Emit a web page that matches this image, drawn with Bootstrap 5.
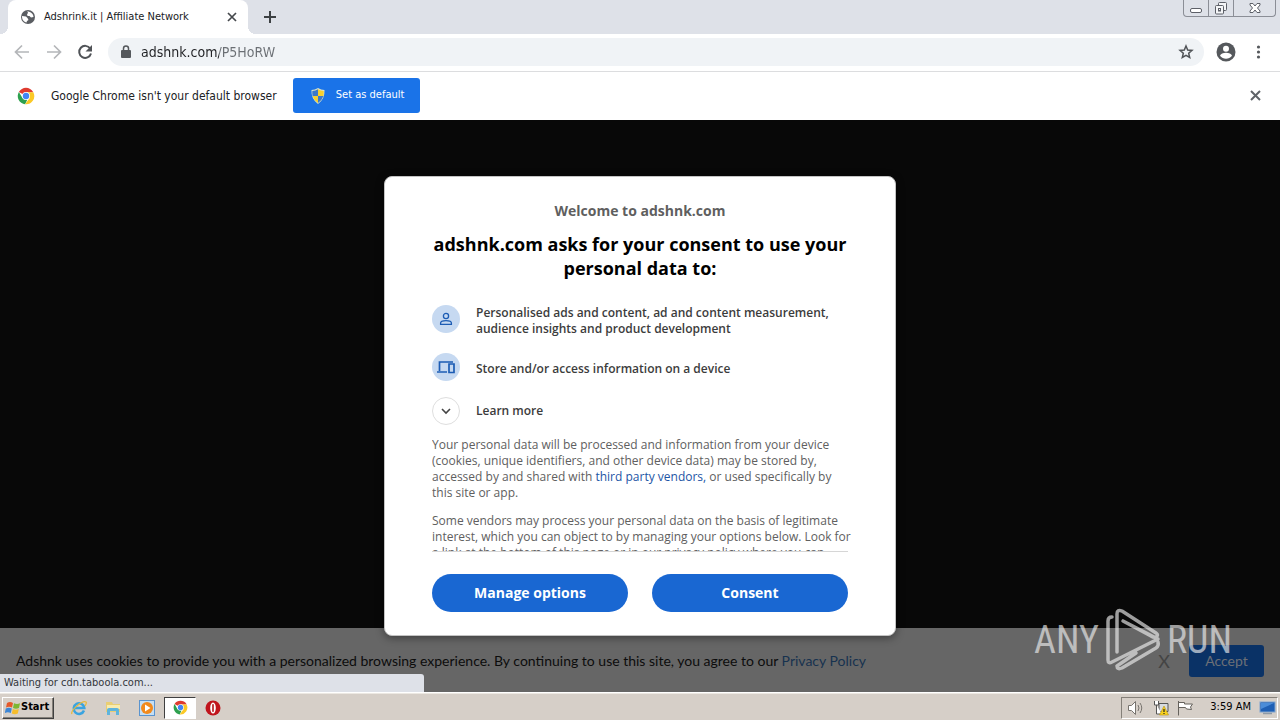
<!DOCTYPE html>
<html lang="en">
<head>
<meta charset="utf-8">
<meta name="viewport" content="width=device-width, initial-scale=1">
<title>Adshrink.it | Affiliate Network</title>
<link href="https://cdn.jsdelivr.net/npm/bootstrap@5.3.0/dist/css/bootstrap.min.css" rel="stylesheet">
<style>
  :root { --ui: "DejaVu Sans Condensed", "DejaVu Sans", sans-serif; --chrome-ink: #5f6368; }
  body { font-family: var(--ui); color: #202124; background: #d6cfc8; min-height: 100vh; }
  svg { display: block; flex: none; }
  .bare { border: 0; background: none; padding: 0; color: var(--chrome-ink); }

  /* tab strip */
  .tab-strip { background: #dee1e8; height: 34px; padding-left: 8px; }
  .page-tab { width: 240px; background: #fff; border-radius: 8px 8px 0 0; padding: 0 10px 0 12px; font-size: 11px; line-height: 16px; position: relative; }
  .page-tab::before, .page-tab::after { content: ""; position: absolute; bottom: 0; width: 8px; height: 8px; }
  .page-tab::before { left: -8px; background: radial-gradient(circle at 0 0, #dee1e8 8px, #fff 8px); }
  .page-tab::after { right: -8px; background: radial-gradient(circle at 100% 0, #dee1e8 8px, #fff 8px); }
  .win-btns { height: 17px; border: 1px solid #8b8e96; border-top: 0; border-radius: 0 0 4px 4px; margin-right: 4px; }
  .win-btns button { width: 25px; border-right: 1px solid #8b8e96; }
  .win-btns button:last-child { width: 41px; border-right: 0; }

  /* toolbar */
  .tool-bar { background: #fff; height: 38px; border-bottom: 1px solid #dcdddf; padding: 0 15px 2px 13px; }
  .nav-btns { gap: 14px; margin-right: 15px; }
  .omnibox { background: #f0f3f6; height: 28px; border-radius: 14px; padding: 0 9px 0 9px; margin-right: 12px; }
  .omnibox input { border: 0; outline: 0; padding: 0; margin-left: 6px; min-width: 0; font-size: 14px; line-height: 20px; color: transparent;
    background: linear-gradient(90deg, #202124 78px, #6b6f74 78px); -webkit-background-clip: text; background-clip: text; }

  /* default browser prompt */
  .prompt-bar { background: #fff; height: 48px; padding: 0 19px 1px 17px; font-size: 12px; }
  .btn-default-app { background: #1a73e8; color: #fff; border: 0; border-radius: 3px; height: 35px; width: 127px; font-size: 11px; }

  /* page */
  .page-view { background: #080808; }
  .cookie-bar { background: #666; color: #0c0c0c; height: 64px; padding: 2px 16px 0; font-family: Lato, sans-serif; font-size: 14px; line-height: 20px; }
  .cookie-bar a { color: #17324f; text-decoration: none; }
  .cookie-bar .btn-accept { background: #0a3266; color: #6c7076; border: 0; border-radius: 3px; width: 75px; height: 32px; font-size: 14px; }
  .dismiss { color: #444; font-size: 18px; margin-right: 19px; }
  .overlay-layer { position: absolute; inset: 0; }
  .consent { width: 512px; height: 460px; background: #fff; border: 1px solid #c3c3c3; border-radius: 8px; padding: 23px 47px; font-family: "Open Sans", sans-serif; color: #333; box-shadow: 0 2px 8px rgba(0,0,0,.4); }
  .consent .welcome { font-size: 14px; line-height: 22px; font-weight: 700; color: #5f5f5f; margin-bottom: 10px; }
  .consent h1 { font-size: 18px; line-height: 24px; font-weight: 700; color: #000; margin: 0; }
  .scroller { margin: 25px -4px 0 0; height: 246px; overflow: hidden; font-size: 12px; line-height: 16px; }
  .purpose { font-weight: 600; gap: 16px; color: #3c3c3c; }
  .disc { width: 28px; height: 28px; border-radius: 50%; background: #c6d9f1; color: #1c5cb4; flex: none; }
  .disc-open { background: #fff; border: 1px solid #dedede; color: #444; }
  .legal { color: #606060; margin: 0 0 12px; }
  .legal a { color: #1d55a5; text-decoration: none; }
  .actions { border-top: 1px solid #d6d6d6; padding-top: 22px; }
  .btn-consent { background: #1967d2; color: #fff; border-radius: 19px; height: 38px; border: 0; padding-bottom: 2px; font-size: 14px; font-weight: 700; flex: 1 1 0; }
  .status-text { position: absolute; left: 0; bottom: 0; width: 424px; height: 18px; background: #dee1e8; border-radius: 0 3px 0 0; font-size: 11px; line-height: 18px; padding-left: 4px; color: #33363a; }
  .brand-mark { position: absolute; right: 48px; bottom: 20px; height: 64px; gap: 6px; color: rgba(235,235,235,.66); font-family: "Roboto Condensed", Roboto, sans-serif; font-size: 38px; line-height: 64px; pointer-events: none; }

  /* desktop task bar */
  .task-bar { height: 28px; background: #d6cfc8; border-top: 1px solid #fff; box-shadow: inset 0 1px #ece8e2; padding: 2px 2px 0; font-size: 11px; }
  .start-btn { width: 52px; height: 22px; background: #d6cfc8; border: 1px solid; border-color: #fff #404040 #404040 #fff; box-shadow: inset -1px -1px #858079; padding: 0 2px; font-weight: 700; color: #000; }
  .launch { width: 34px; height: 22px; }
  .launch-on { background: #fff; border: 1px solid; border-color: #404040 #fff #fff #404040; width: 32px; }
  .tray { height: 22px; border: 1px solid; border-color: #858079 #fff #fff #858079; padding: 0 1px 0 5px; color: #000; }
</style>
</head>
<body class="d-flex flex-column">
<svg width="0" height="0" class="position-absolute" aria-hidden="true">
  <symbol id="chrome" viewBox="0 0 48 48">
    <circle cx="24" cy="24" r="22" fill="#fff"/>
    <path d="M24 24L5 13A22 22 0 0 1 43 13L43.500 14H24z" fill="#df3b2f"/>
    <path d="M5 13l9.500 16.500L24 24l3 10.600L21.500 46A22 22 0 0 1 5 13z" fill="#2da04e"/>
    <path d="M43.500 14a22 22 0 0 1-22 32l12-16.500L24 24V14z" fill="#fbc926"/>
    <circle cx="24" cy="24" r="10.500" fill="#fff"/><circle cx="24" cy="24" r="8.500" fill="#4285f4"/>
  </symbol>
</svg>

<header>
  <div class="tab-strip d-flex align-items-start">
    <div class="page-tab h-100 d-flex align-items-center">
      <svg width="16" height="16" viewBox="0 0 16 16"><circle cx="8" cy="8" r="7" fill="#5a5d62"/><path d="M2 7l4 .5 1.500 1.500 1 2-1.500 1-.5 1.500C4 13 2 11 2 7zM7 2.500q2 1.500 0 2.500l.5 2h2l1.500 1.500 2.500-.5C13.500 5 11 2.500 7 2.500z" fill="#fff"/></svg>
      <span class="ms-2 flex-grow-1 text-nowrap">Adshrink.it | Affiliate Network</span>
      <button class="bare" type="button" aria-label="Close tab"><svg width="12" height="12" viewBox="0 0 12 12" stroke="#45484c" stroke-width="1.700"><path d="M2 2l8 8M10 2l-8 8"/></svg></button>
    </div>
    <button class="bare h-100 ms-3" type="button" aria-label="New tab"><svg width="12" height="12" viewBox="0 0 12 12" stroke="#3c4043" stroke-width="2"><path d="M6 0v12M0 6h12"/></svg></button>
    <div class="win-btns d-flex ms-auto">
      <button class="bare d-flex justify-content-center" type="button" aria-label="Minimize"><svg width="14" height="16" viewBox="0 0 14 16"><rect x="1.500" y="8.500" width="11" height="4" rx="1.500" fill="#fff" stroke="#5d6068"/></svg></button>
      <button class="bare d-flex justify-content-center" type="button" aria-label="Restore"><svg width="14" height="16" viewBox="0 0 14 16" fill="#f4f5f7" stroke="#5d6068"><rect x="4.500" y="2.500" width="8" height="8" rx="1"/><rect x="1.500" y="5.500" width="8" height="8.500" rx="1"/><rect x="4.500" y="8.500" width="2" height="2.500"/></svg></button>
      <button class="bare d-flex justify-content-center" type="button" aria-label="Close"><svg width="14" height="16" viewBox="0 0 14 16" fill="#fff" stroke="#5d6068"><path d="M2 3.500h3l2 2.500 2-2.500h3v1.500L9.500 8l2.500 3v1.500H9L7 10l-2 2.500H2V11l2.500-3L2 5z"/></svg></button>
    </div>
  </div>

  <nav class="tool-bar d-flex align-items-center" aria-label="Browser toolbar">
    <div class="nav-btns d-flex align-items-center">
      <button class="bare" type="button" aria-label="Back"><svg width="18" height="18" viewBox="0 0 18 18" fill="none" stroke="#b4b6b9" stroke-width="1.700"><path d="M16 9H3M9 2.500L2.500 9 9 15.500"/></svg></button>
      <button class="bare" type="button" aria-label="Forward"><svg width="18" height="18" viewBox="0 0 18 18" fill="none" stroke="#b4b6b9" stroke-width="1.700"><path d="M2 9h13M9 2.500L15.500 9 9 15.500"/></svg></button>
      <button class="bare" type="button" aria-label="Reload"><svg width="16" height="16" viewBox="0 0 16 16"><path d="M13.200 4.500A6 6 0 1 0 14 9.500" fill="none" stroke="#505357" stroke-width="2"/><path d="M15 1v6.500H8.500z" fill="#505357"/></svg></button>
    </div>
    <div class="omnibox d-flex align-items-center flex-grow-1">
      <svg width="18" height="16" viewBox="0 0 18 16"><rect x="4" y="6" width="10" height="8" rx="1" fill="#55585c"/><path d="M6.500 6V4.500a2.500 2.500 0 0 1 5 0V6" fill="none" stroke="#55585c" stroke-width="1.500"/></svg>
      <input class="flex-grow-1" type="text" value="adshnk.com/P5HoRW" aria-label="Address">
      <button class="bare" type="button" aria-label="Bookmark this page"><svg width="18" height="18" viewBox="0 0 18 18" fill="none" stroke="#505357" stroke-width="1.500"><path d="M9 3l1.700 4 4.300.4-3.300 2.900 1 4.200L9 12.300l-3.700 2.200 1-4.200L3 7.400 7.300 7z"/></svg></button>
    </div>
    <button class="bare me-3" type="button" aria-label="Profile"><svg width="20" height="20" viewBox="0 0 20 20"><circle cx="10" cy="10" r="9.500" fill="#55585c"/><circle cx="10" cy="6.800" r="3" fill="#fff"/><path d="M4 13.800c1-4 11-4 12 0-3 4-9 4-12 0z" fill="#fff"/></svg></button>
    <button class="bare" type="button" aria-label="Menu"><svg width="13" height="16" viewBox="0 0 13 16" fill="#55585c"><circle cx="6.500" cy="3" r="1.600"/><circle cx="6.500" cy="8" r="1.600"/><circle cx="6.500" cy="13" r="1.600"/></svg></button>
  </nav>

  <div class="prompt-bar d-flex align-items-center">
    <svg width="18" height="18"><use href="#chrome"/></svg>
    <span class="ms-3 text-nowrap">Google Chrome isn't your default browser</span>
    <button class="btn-default-app d-flex align-items-center justify-content-center gap-2 ms-3" type="button">
      <svg width="20" height="16" viewBox="0 0 20 16"><path d="M10 0q3 2 6.500 2Q17 11 10 16 3 11 3.500 2 7 2 10 0z" fill="#d9e3c8"/><path d="M10 1.200V8H4.600q-.4-2-.3-5Q7.500 3 10 1.200z" fill="#3b78c9"/><path d="M10 1.200Q12.500 3 15.700 3q.1 3-.3 5H10z" fill="#f5cf2e"/><path d="M4.600 8H10v7Q5.800 12 4.600 8z" fill="#f5cf2e"/><path d="M15.400 8H10v7q4.200-3 5.400-7z" fill="#3b78c9"/></svg>
      Set as default
    </button>
    <button class="bare ms-auto" type="button" aria-label="Dismiss"><svg width="11" height="11" viewBox="0 0 11 11" stroke="#5f6368" stroke-width="2"><path d="M1 1l9 9M10 1l-9 9"/></svg></button>
  </div>
</header>

<main class="page-view position-relative flex-grow-1 d-flex flex-column justify-content-end">
  <div class="cookie-bar d-flex align-items-center">
    <span>Adshnk uses cookies to provide you with a personalized browsing experience. By continuing to use this site, you agree to our <a href="#">Privacy Policy</a></span>
    <button class="bare dismiss ms-auto" type="button">X</button>
    <button class="btn-accept" type="button">Accept</button>
  </div>

  <div class="overlay-layer d-flex align-items-center justify-content-center">
    <section class="consent" role="dialog" aria-labelledby="ask">
      <p class="welcome text-center">Welcome to adshnk.com</p>
      <h1 id="ask" class="text-center">adshnk.com asks for your consent to use your personal data to:</h1>
      <div class="scroller">
        <div class="purpose d-flex mb-3">
          <span class="disc d-flex align-items-center justify-content-center"><svg width="16" height="16" viewBox="0 0 16 16" fill="none" stroke="currentColor" stroke-width="1.300"><circle cx="8" cy="5" r="2.600"/><path d="M2.600 13.300v-1.200c0-3.200 10.800-3.200 10.800 0v1.200z"/></svg></span>
          <span>Personalised ads and content, ad and content measurement, audience insights and product development</span>
        </div>
        <div class="purpose d-flex align-items-center mb-3">
          <span class="disc d-flex align-items-center justify-content-center"><svg width="20" height="16" viewBox="0 0 20 16" fill="none" stroke="currentColor" stroke-width="1.700"><path d="M3.500 12V3H17M1 13h10M13 5h5v8.500h-5z"/></svg></span>
          <span class="pt-1">Store and/or access information on a device</span>
        </div>
        <div class="purpose d-flex align-items-center mb-2 pb-1">
          <button class="bare disc disc-open d-flex align-items-center justify-content-center" type="button" aria-label="Learn more"><svg width="12" height="12" viewBox="0 0 12 12" fill="none" stroke="currentColor" stroke-width="1.600"><path d="M2 4l4 4 4-4"/></svg></button>
          <span>Learn more</span>
        </div>
        <p class="legal">Your personal data will be processed and information from your device (cookies, unique identifiers, and other device data) may be stored by, accessed by and shared with <a href="#">third party vendors,</a> or used specifically by this site or app.</p>
        <p class="legal">Some vendors may process your personal data on the basis of legitimate interest, which you can object to by managing your options below. Look for a link at the bottom of this page or in our privacy policy where you can withdraw consent.</p>
      </div>
      <div class="actions d-flex gap-4">
        <button class="btn-consent" type="button">Manage options</button>
        <button class="btn-consent" type="button">Consent</button>
      </div>
    </section>
  </div>

  <div class="brand-mark d-flex align-items-center">
    <span>ANY</span>
    <svg width="56" height="64" viewBox="0 0 56 64" fill="none" stroke="currentColor" stroke-width="3.500" stroke-linejoin="round" stroke-linecap="round"><path d="M7 9Q3 9 3 13v39q0 4 4 2l46-23L18 13M12 44V6q0-5 5-3l34 22q3 2 0 4-2 1-5-1L18 13M12 58q0 4 5 2l34-20q3-2 2-6M12 58l19-13"/></svg>
    <span>RUN</span>
  </div>

  <div class="status-text" role="status">Waiting for cdn.taboola.com...</div>
</main>

<footer class="task-bar d-flex align-items-center">
  <button class="start-btn d-flex align-items-center" type="button"><svg width="16" height="16" viewBox="0 0 16 16"><path d="M2 3q3-2 6 0L7 7.500q-3-1.500-6 0z" fill="#e5592b"/><path d="M9 3.300q3 1.500 6 0L14 8q-3 1.500-6 0z" fill="#7db733"/><path d="M.8 8.500q3-1.500 6 0l-1 4.500q-3-1.500-6 0z" fill="#3c86d6"/><path d="M7.800 9q3 1.500 6 0l-1 4.500q-3 1.500-6 0z" fill="#f6bd2c"/></svg>Start</button>
  <button class="bare launch d-flex align-items-center justify-content-center ms-2" type="button" aria-label="Internet Explorer"><svg width="18" height="18" viewBox="0 0 18 18" fill="none"><path d="M14 11.500A5.300 5.300 0 1 1 14.300 9H5" stroke="#3aa4e0" stroke-width="2.500"/><path d="M2 15C0 12 12 1 16 3q1 1-1 4" stroke="#e7b93c" stroke-width="1.300"/></svg></button>
  <button class="bare launch d-flex align-items-center justify-content-center" type="button" aria-label="Explorer"><svg width="18" height="18" viewBox="0 0 18 18"><path d="M2 3h6l1 2h7v8H2z" fill="#e9ce73"/><path d="M3 6h13v4H3z" fill="#f8ebae"/><path d="M3 16v-5q0-2 2-2h8q2 0 2 2v5h-3v-4H6v4z" fill="#5fb4dc"/></svg></button>
  <button class="bare launch d-flex align-items-center justify-content-center" type="button" aria-label="Media Player"><svg width="18" height="18" viewBox="0 0 18 18"><rect x="1.500" y="1.500" width="15" height="15" fill="#c5dff4" stroke="#5a94cf"/><circle cx="9" cy="9" r="6" fill="#f28a1c"/><path d="M7 5.500v7L12.500 9z" fill="#fff"/></svg></button>
  <button class="bare launch launch-on d-flex align-items-center justify-content-center" type="button" aria-label="Chrome"><svg width="15" height="15"><use href="#chrome"/></svg></button>
  <button class="bare launch d-flex align-items-center justify-content-center" type="button" aria-label="Opera"><svg width="16" height="16" viewBox="0 0 16 16"><circle cx="8" cy="8" r="7.500" fill="#c0141c"/><ellipse cx="8" cy="8" rx="2.800" ry="5.500" fill="#fff"/><rect x="7.200" y="4" width="1.600" height="8" rx=".8" fill="#b3121a"/></svg></button>
  <div class="tray d-flex align-items-center ms-auto gap-2">
    <svg width="18" height="16" viewBox="0 0 18 16" fill="#fff" stroke="#77736e"><path d="M1.500 5.500h3l4-4v13l-4-4h-3z"/><path d="M11 5q2 3 0 6M13 3q3.500 5 0 10" fill="none"/></svg>
    <svg width="16" height="16" viewBox="0 0 16 16"><path d="M6 3.500h9v8H6z" fill="#d7dbe0" stroke="#555"/><path d="M1.500 1v4h4V1M3.500 5v9H9" fill="#fff" stroke="#555"/><path d="M11 6l4.500 9h-9z" fill="#f9d21d" stroke="#b59112" stroke-width=".6"/><path d="M11 9v3M11 13v1" stroke="#222" stroke-width="1.200"/></svg>
    <svg width="17" height="16" viewBox="0 0 17 16" fill="#fff" stroke="#66625d"><path d="M1.500 1v14.500M1.500 2.500h6v1.500h8l-2 3 1 2.500-5-.5-1-1.500h-7z"/></svg>
    <span class="ms-2 text-nowrap">3:59 AM</span>
    <svg width="17" height="14" viewBox="0 0 17 14"><rect x="1" y="1" width="15" height="10" fill="#1f5fb4" stroke="#7ea4cf"/><path d="M2 2h13L2 8z" fill="#4b8cd8"/><path d="M4 12.500h9" stroke="#8f9aa6" stroke-width="1.500"/></svg>
  </div>
</footer>
<script src="https://cdn.jsdelivr.net/npm/bootstrap@5.3.0/dist/js/bootstrap.bundle.min.js"></script>
</body>
</html>
